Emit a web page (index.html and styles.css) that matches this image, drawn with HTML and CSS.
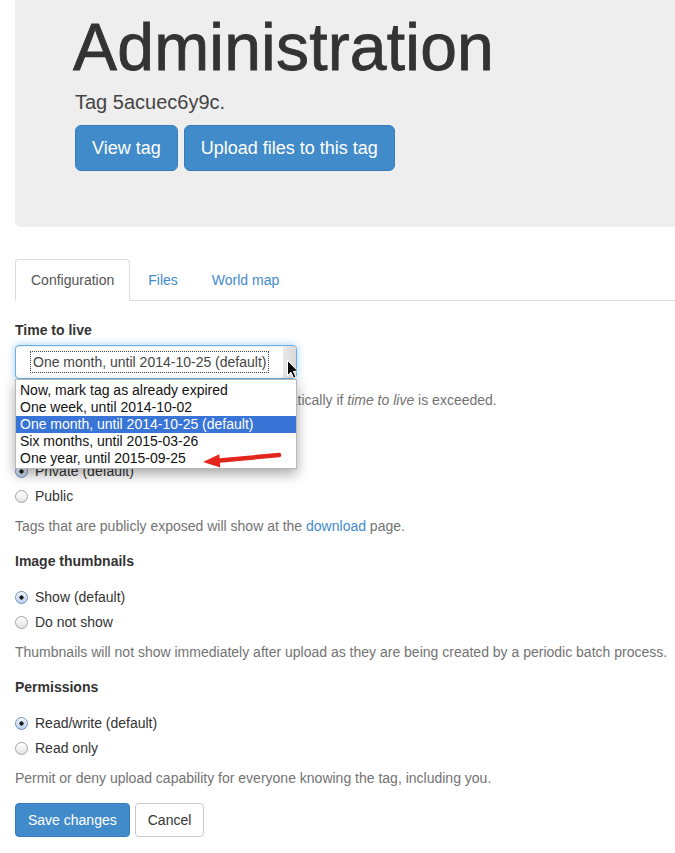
FILE: index.html
```html
<!DOCTYPE html>
<html lang="en">
<head>
<meta charset="utf-8">
<title>Administration</title>
<link rel="stylesheet" href="styles.css">
</head>
<body>
<div class="page">
  <div class="jumbotron">
    <h1>Administration</h1>
    <p class="lead">Tag 5acuec6y9c.</p>
    <div class="actions">
      <a class="btn btn-lg btn-primary" href="#">View tag</a>
      <a class="btn btn-lg btn-primary" href="#">Upload files to this tag</a>
    </div>
  </div>

  <ul class="nav-tabs">
    <li class="active"><a href="#">Configuration</a></li>
    <li><a href="#">Files</a></li>
    <li><a href="#">World map</a></li>
  </ul>

  <form class="tab-content">
    <div class="form-group ttl">
      <label class="control-label">Time to live</label>
      <div class="select-wrap">
        <div class="select">
          <span class="select-value">One month, until 2014-10-25 (default)</span>
          <span class="select-strip"></span>
        </div>
        <ul class="dropdown">
          <li>Now, mark tag as already expired</li>
          <li>One week, until 2014-10-02</li>
          <li class="selected">One month, until 2014-10-25 (default)</li>
          <li>Six months, until 2015-03-26</li>
          <li>One year, until 2015-09-25</li>
        </ul>
        <svg class="cursor" width="12" height="19" viewBox="0 0 12 19">
          <path d="M0.5 0.5 L0.5 15.5 L4 12.2 L6.6 18.2 L9 17.2 L6.4 11.3 L11 11.3 Z" fill="#000" stroke="#fff" stroke-width="1" stroke-linejoin="round"/>
        </svg>
      </div>
      <p class="help-block">The tag and all its files will be deleted automatically if <em>time to live</em> is exceeded.</p>
      <svg class="arrow" width="95" height="26" viewBox="0 0 95 26">
        <line x1="84" y1="10" x2="22" y2="15.8" stroke="#e3261d" stroke-width="4.5" stroke-linecap="round"/>
        <polygon points="8,17 25.3,22.5 24.3,9.3" fill="#e3261d"/>
      </svg>
    </div>

    <div class="form-group">
      <label class="control-label">Visibility</label>
      <label class="radio"><input type="radio" name="vis" checked><span>Private (default)</span></label>
      <label class="radio"><input type="radio" name="vis"><span>Public</span></label>
      <p class="help-block">Tags that are publicly exposed will show at the <a href="#">download</a> page.</p>
    </div>

    <div class="form-group">
      <label class="control-label">Image thumbnails</label>
      <label class="radio"><input type="radio" name="thumb" checked><span>Show (default)</span></label>
      <label class="radio"><input type="radio" name="thumb"><span>Do not show</span></label>
      <p class="help-block">Thumbnails will not show immediately after upload as they are being created by a periodic batch process.</p>
    </div>

    <div class="form-group">
      <label class="control-label">Permissions</label>
      <label class="radio"><input type="radio" name="perm" checked><span>Read/write (default)</span></label>
      <label class="radio"><input type="radio" name="perm"><span>Read only</span></label>
      <p class="help-block">Permit or deny upload capability for everyone knowing the tag, including you.</p>
    </div>

    <div class="form-actions">
      <button type="button" class="btn btn-primary">Save changes</button>
      <button type="button" class="btn btn-default">Cancel</button>
    </div>
  </form>
</div>
</body>
</html>
```
FILE: styles.css
```css
html, body {
  margin: 0;
  padding: 0;
  overflow: hidden;
  background: #fff;
}

body {
  font-family: "Liberation Sans", Arial, Helvetica, sans-serif;
  font-size: 14px;
  line-height: 20px;
  color: #333;
}

.page {
  width: 740px;
  padding-left: 15px;
}

a {
  color: #428bca;
  text-decoration: none;
}

/* Jumbotron */
.jumbotron {
  background: #eeeeee;
  padding: 11px 60px 56px;
  border-radius: 0 0 6px 6px;
  margin-bottom: 32px;
}

.jumbotron h1 {
  font-size: 66px;
  line-height: 72px;
  font-weight: normal;
  letter-spacing: 0.2px;
  -webkit-text-stroke: 0.8px #333;
  margin: 0 0 0 -2px;
  color: #333;
}

.jumbotron .lead {
  font-size: 20px;
  line-height: 28px;
  margin: 5px 0 9px;
  color: #444;
}

.actions {
  display: flex;
  gap: 6px;
}

.btn {
  display: inline-block;
  font-family: inherit;
  padding: 6px 12px;
  font-size: 14px;
  line-height: 20px;
  border: 1px solid transparent;
  border-radius: 4px;
  cursor: pointer;
}

.btn-lg {
  padding: 10px 16px;
  font-size: 18px;
  line-height: 24px;
  border-radius: 6px;
}

.btn-primary {
  background: #428bca;
  border-color: #357ebd;
  color: #fff;
}

.btn-default {
  background: #fff;
  border-color: #ccc;
  color: #333;
}

/* Tabs */
.nav-tabs {
  display: flex;
  list-style: none;
  margin: 0;
  padding: 0;
  border-bottom: 1px solid #ddd;
}

.nav-tabs li {
  margin-bottom: -1px;
}

.nav-tabs a {
  display: block;
  padding: 10px 15px;
  line-height: 20px;
  margin-right: 2px;
  border: 1px solid transparent;
  border-radius: 4px 4px 0 0;
}

.nav-tabs .active a {
  color: #555;
  background: #fff;
  border-color: #ddd #ddd transparent;
}

/* Form */
.tab-content {
  padding-top: 19px;
}

.form-group {
  display: flex;
  flex-direction: column;
  align-items: flex-start;
  margin-bottom: 15px;
}

.control-label {
  display: block;
  font-weight: bold;
  margin-bottom: 6px;
}

.ttl {
  position: relative;
}

.ttl .control-label {
  margin-bottom: 5px;
}

.select-wrap {
  position: relative;
  width: 282px;
}

.select {
  display: flex;
  align-items: center;
  box-sizing: border-box;
  height: 34px;
  padding-left: 15px;
  border: 1px solid #66afe9;
  border-radius: 4px;
  background: #fff;
  box-shadow: inset 0 1px 1px rgba(0, 0, 0, .075), 0 0 8px rgba(102, 175, 233, .6);
  color: #444;
}

.select-value {
  padding: 0 2px;
  line-height: 20px;
  outline: 1px dotted #444;
}

.select-strip {
  margin-left: auto;
  align-self: stretch;
  width: 13px;
  background: linear-gradient(to right, #e9e9e9, #d9d9d9);
  border-radius: 0 3px 3px 0;
}

.dropdown {
  position: absolute;
  left: 0;
  top: 100%;
  width: 282px;
  box-sizing: border-box;
  margin: 0;
  padding: 2px 0 1px;
  list-style: none;
  background: #fff;
  border: 1px solid #b8b8b8;
  box-shadow: 0 5px 12px rgba(0, 0, 0, .35);
  z-index: 2;
  color: #111;
}

.dropdown li {
  line-height: 17px;
  padding-left: 4px;
}

.dropdown .selected {
  background: #3875d7;
  color: #fff;
}

.cursor {
  position: absolute;
  left: 272px;
  top: 15px;
  z-index: 3;
}

.arrow {
  position: absolute;
  left: 180px;
  top: 125px;
  z-index: 3;
}

.help-block {
  display: block;
  color: #737373;
  margin: 10px 0 0;
}

.ttl .help-block {
  margin-top: 11px;
}

.radio {
  display: flex;
  align-items: center;
  gap: 7px;
  margin: 10px 0 0;
  line-height: 20px;
  font-weight: normal;
}

.radio + .radio {
  margin-top: 5px;
}

.radio input {
  appearance: none;
  -webkit-appearance: none;
  margin: 0;
  width: 13px;
  height: 13px;
  flex: none;
  border-radius: 50%;
  border: 1px solid #a3a3a3;
  background: linear-gradient(#ffffff, #e3e3e3);
  box-shadow: inset 0 1px 1px rgba(255, 255, 255, .8);
}

.radio input:checked {
  border-color: #6f8fb8;
  background: radial-gradient(circle, #1c1c1c 0 1.8px, transparent 2.4px), linear-gradient(#eaf1fb, #bcd1ee);
}

.form-actions {
  display: flex;
  gap: 5px;
}
```
